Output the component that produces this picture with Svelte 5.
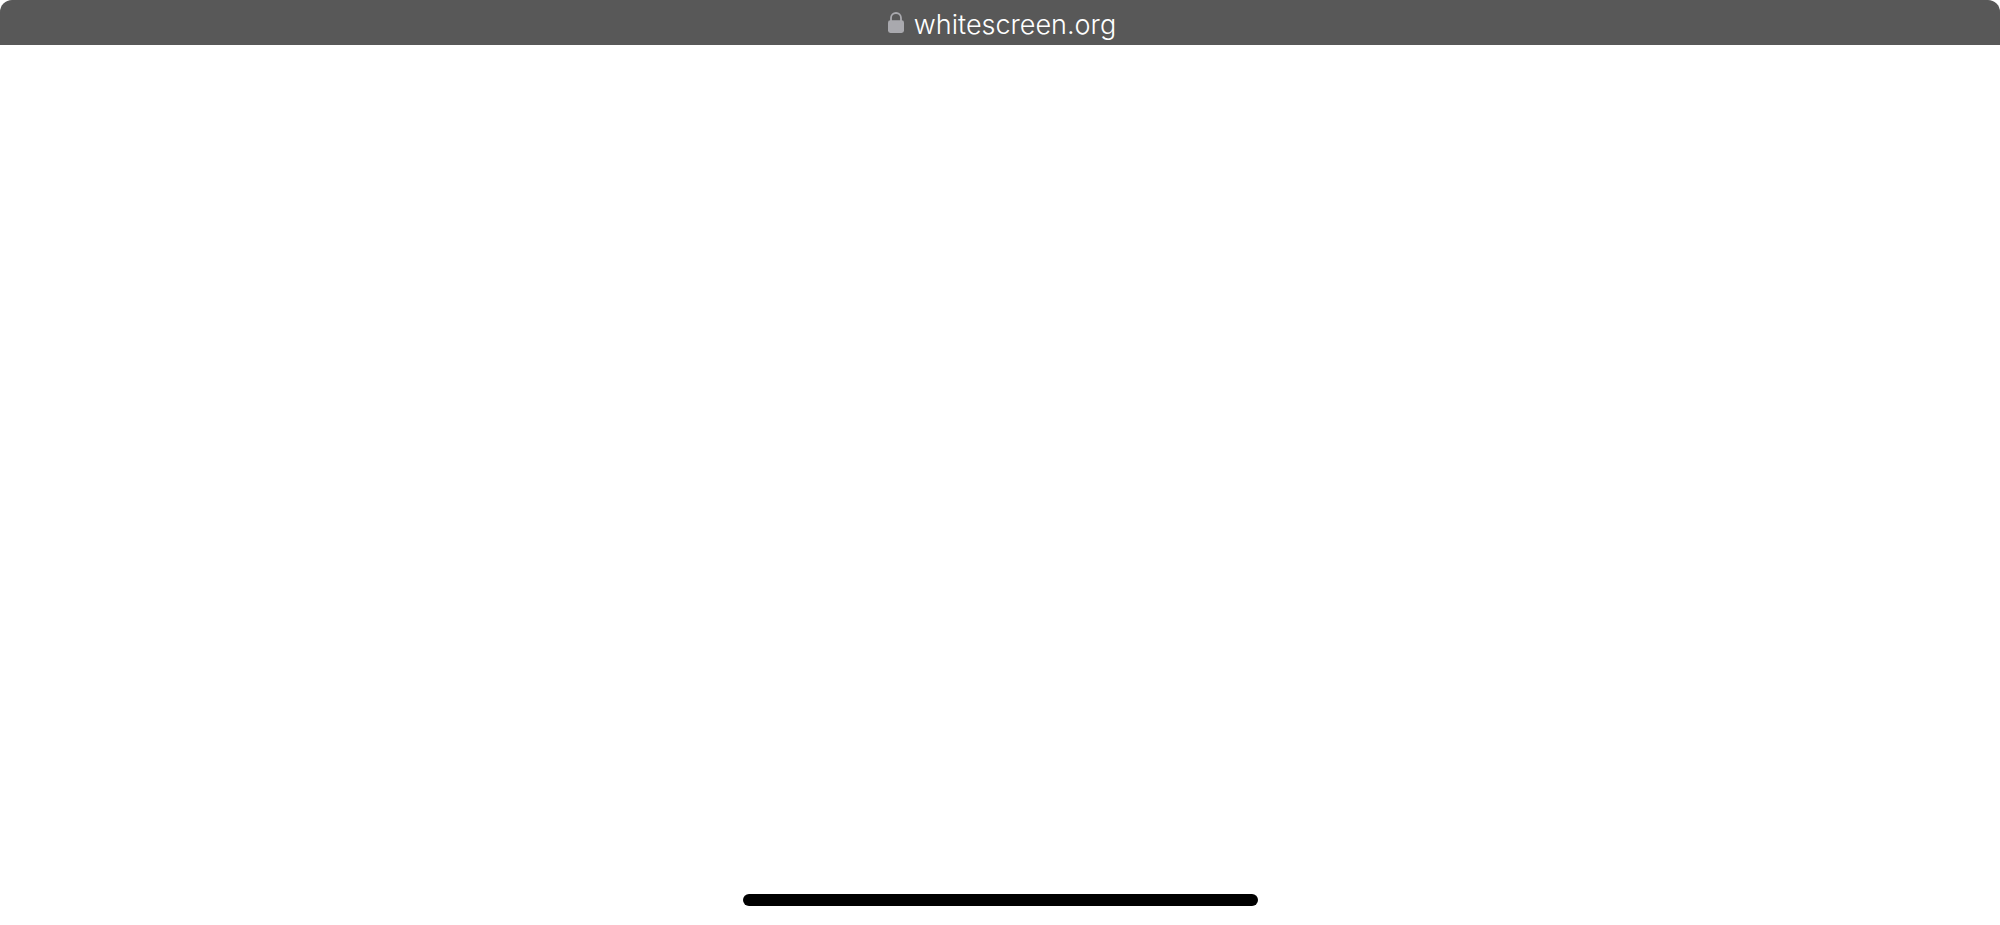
<script>
	const address = 'whitescreen.org';
</script>

<div class="screen">
	<header class="address-bar">
		<svg class="lock" viewBox="0 0 16 21" width="16" height="21" aria-hidden="true">
			<path d="M3 9V6a5 5 0 0 1 10 0V9" fill="none" stroke="#a9a9ae" stroke-width="1.8" />
			<rect x="0" y="8.2" width="16" height="12.8" rx="2.4" fill="#a9a9ae" />
		</svg>
		<span class="url">{address}</span>
	</header>
	<main class="blank"></main>
	<footer class="home-area">
		<div class="home-indicator"></div>
	</footer>
</div>

<style>
	:global(body) {
		margin: 0;
		background: #fff;
	}

	.screen {
		display: flex;
		flex-direction: column;
		height: 925px;
		overflow: hidden;
		background: #fff;
	}

	.address-bar {
		display: flex;
		align-items: center;
		justify-content: center;
		gap: 10px;
		height: 45px;
		padding-left: 4px;
		flex-shrink: 0;
		background: #585858;
		border-radius: 12px 12px 0 0;
	}

	.lock {
		flex-shrink: 0;
	}

	.url {
		font-family: Inter, "Liberation Sans", sans-serif;
		font-size: 27px;
		font-weight: 300;
		line-height: 45px;
		padding-top: 3px;
		color: #fff;
	}

	.blank {
		flex: 1;
	}

	.home-area {
		display: flex;
		justify-content: center;
		padding-bottom: 19px;
	}

	.home-indicator {
		width: 515px;
		height: 12px;
		border-radius: 6px;
		background: #000;
	}
</style>
